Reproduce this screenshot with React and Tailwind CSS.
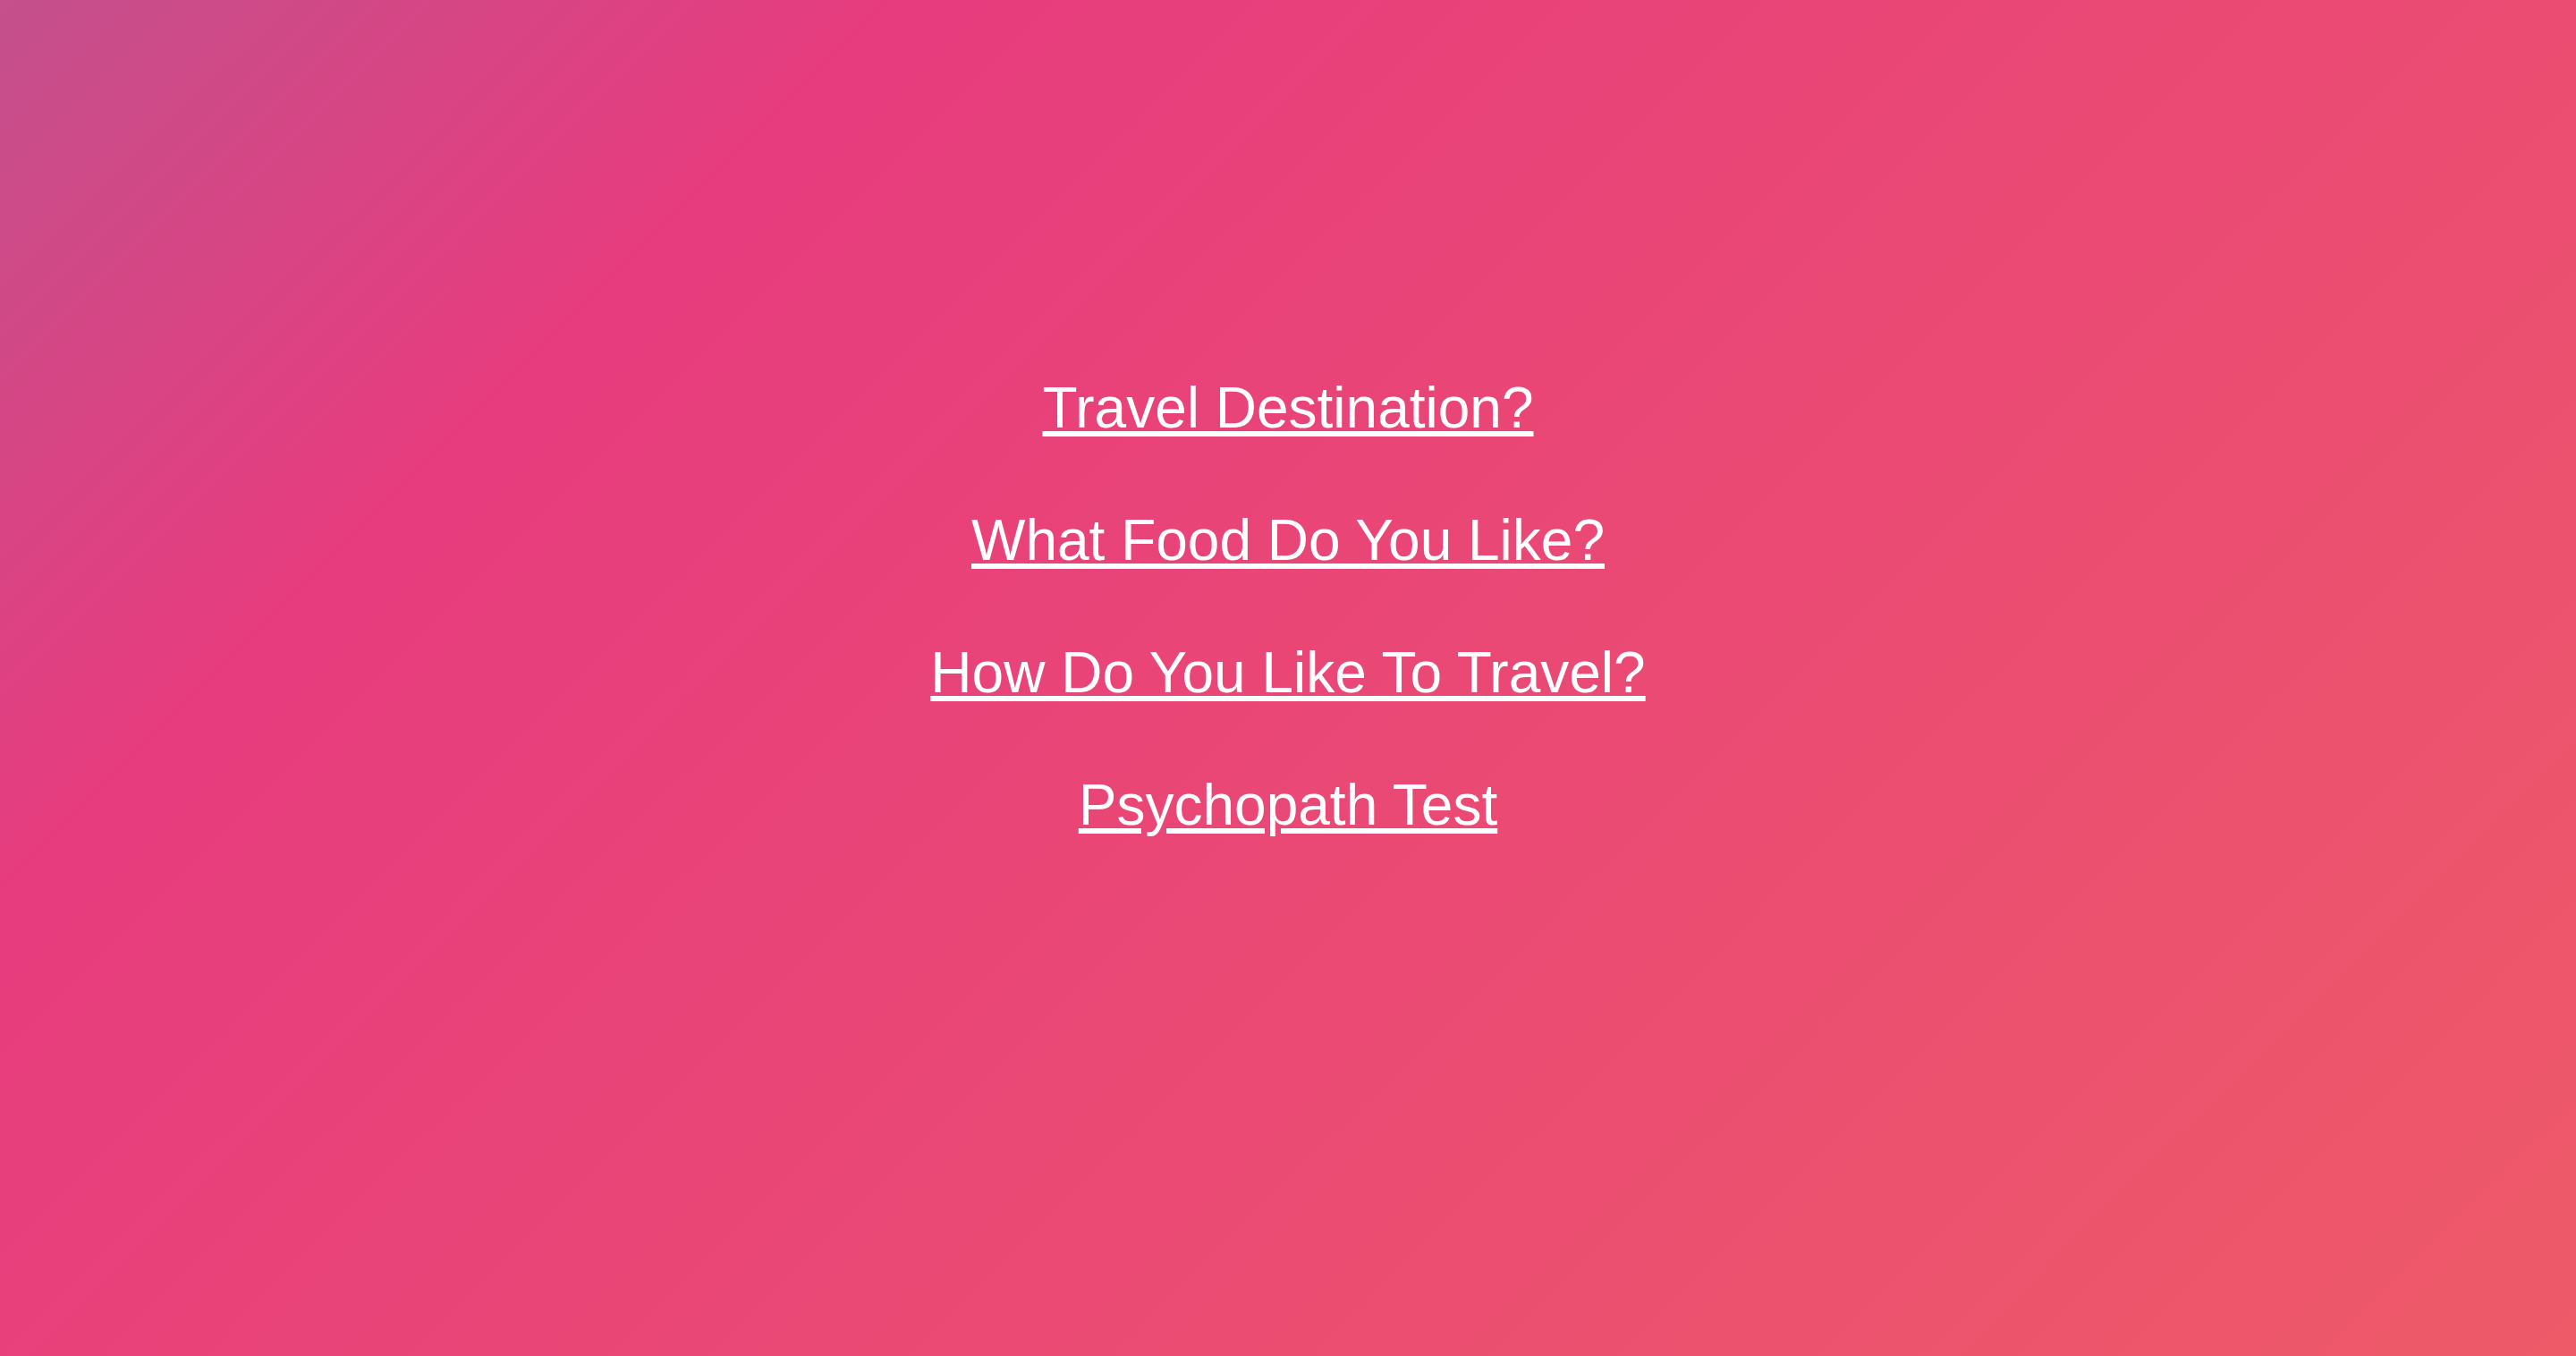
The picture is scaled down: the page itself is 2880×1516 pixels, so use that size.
const links = [
    "Travel Destination?",
    "What Food Do You Like?",
    "How Do You Like To Travel?",
    "Psychopath Test",
]

function App() {
    return (
        <div className="min-h-screen w-full bg-[linear-gradient(135deg,#c4508c_0%,#e73c7e_23%,#ee5a68_100%)] font-['Liberation_Sans',Arial,sans-serif]">
            <nav className="flex flex-col items-center gap-[74px] pt-[419px]">
                {links.map((label) => (
                    <a key={label} href="#" className="text-[64px] leading-[74px] text-white underline">
                        {label}
                    </a>
                ))}
            </nav>
        </div>
    )
}

export default App
